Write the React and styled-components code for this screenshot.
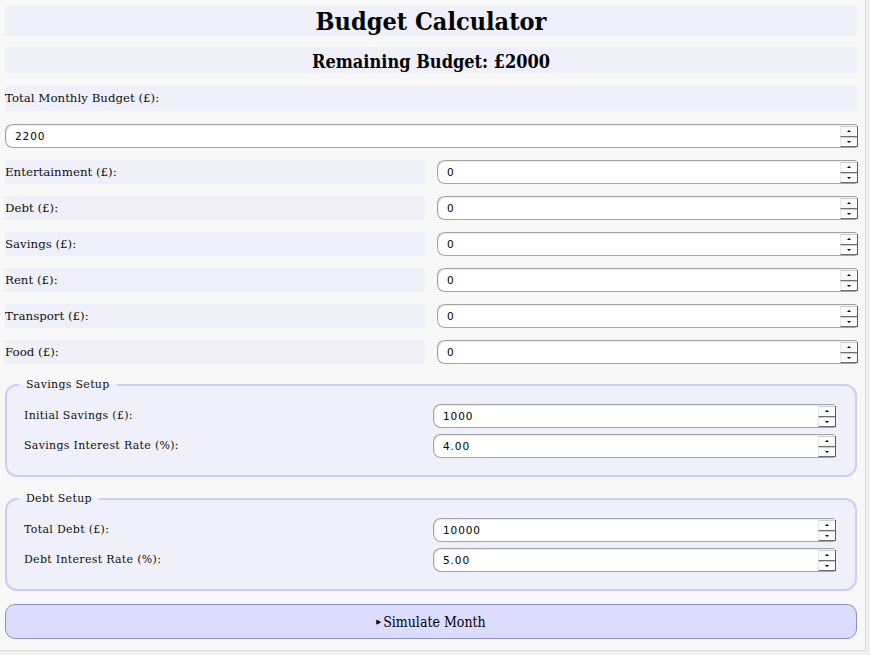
import React from "react";
import styled, { createGlobalStyle } from "styled-components";

const Global = createGlobalStyle`
  html, body { margin: 0; padding: 0; background: #f0f0f0; }
  body { font-family: "DejaVu Serif", serif; }
`;

const Frame = styled.div`
  width: 865px;
  height: 650px;
  background: #f8f8f8;
  border-right: 1px solid #dedede;
  border-bottom: 1px solid #dedede;
  overflow: hidden;
`;

const Page = styled.div`
  width: 852px;
  padding: 6px 0 0 5px;
  display: flex;
  flex-direction: column;
`;

const Title = styled.h1`
  margin: 0;
  height: 30px;
  background: #f0f0fa;
  font-family: "DejaVu Serif Condensed", "DejaVu Serif", serif;
  font-weight: bold;
  font-size: 25px;
  line-height: 31px;
  text-align: center;
  color: #000;
`;

const Remaining = styled.h2`
  margin: 11px 0 0;
  height: 26px;
  background: #f0f0fa;
  font-family: "DejaVu Serif Condensed", "DejaVu Serif", serif;
  font-weight: bold;
  font-size: 18px;
  line-height: 29px;
  text-align: center;
  color: #000;
`;

const LabelBar = styled.div`
  height: 24px;
  background: #f0f0fa;
  font-size: 11.8px;
  line-height: 24px;
  color: #111;
  white-space: nowrap;
`;

const TotalLabel = styled(LabelBar)`
  margin-top: 13px;
  height: 25px;
  line-height: 25px;
`;

const Rows = styled.div`
  display: grid;
  grid-template-columns: 1fr 1fr;
  column-gap: 12px;
  row-gap: 12px;
  margin-top: 12px;
`;

const TopInput = styled.div`
  margin-top: 13px;
`;

const Box = styled.div`
  display: flex;
  height: 24px;
  box-sizing: border-box;
  border: 1px solid #a4a4a4;
  border-right: none;
  border-radius: 8px 2px 2px 8px;
  background: #fff;
  box-shadow: inset 1px 1px 1px rgba(0, 0, 0, 0.08);
`;

const Field = styled.input`
  flex: 1;
  min-width: 0;
  border: none;
  outline: none;
  background: transparent;
  padding: 0 0 0 9px;
  font-family: "DejaVu Sans", sans-serif;
  font-size: 10.5px;
  letter-spacing: 0.9px;
  color: #000;
`;

const Spinner = styled.div`
  width: 17px;
  display: flex;
  flex-direction: column;
  margin: 1px -1px 0 0;
  border-right: 1px solid #5a5a5a;
`;

const SpinBtn = styled.div`
  flex: 1;
  display: flex;
  align-items: center;
  justify-content: center;
  background: #fbfbfb;
  border-top: 1px solid #cfcfcf;
  border-bottom: 1px solid #6e6e6e;
  border-left: 1px solid #e8e8e8;
  &::after {
    content: "";
    border-left: 2px solid transparent;
    border-right: 2px solid transparent;
    ${(p) =>
      p.$up
        ? "border-bottom: 2px solid #000;"
        : "border-top: 2px solid #000;"}
  }
`;

const NumberInput = ({ value }) => (
  <Box>
    <Field type="text" defaultValue={value} />
    <Spinner>
      <SpinBtn $up />
      <SpinBtn />
    </Spinner>
  </Box>
);

const Set = styled.fieldset`
  margin: ${(p) => p.$top}px 0 0;
  padding: 13px 20px 17px 12px;
  border: 2px solid #ccccff;
  border-radius: 12px;
  background: #f0f0fa;
  min-width: 0;
`;

const Legend = styled.legend`
  padding: 0 7px;
  font-size: 11px;
  letter-spacing: 0.3px;
  color: #111;
`;

const SetGrid = styled.div`
  display: grid;
  grid-template-columns: 1fr 1fr;
  column-gap: 7px;
  row-gap: 6px;
  padding-left: 5px;
`;

const SetLabel = styled.div`
  height: 24px;
  line-height: 24px;
  font-size: 11px;
  letter-spacing: 0.3px;
  color: #111;
`;

const Button = styled.button`
  margin-top: 13px;
  height: 35px;
  border: 1px solid #8e8ec8;
  border-radius: 10px;
  background: #dcdcfe;
  font-family: "DejaVu Serif Condensed", "DejaVu Serif", serif;
  font-size: 14px;
  color: #000;
  cursor: pointer;
  display: flex;
  align-items: center;
  justify-content: center;
  gap: 2px;
`;

const Tri = styled.span`
  font-size: 7px;
`;

const categories = ["Entertainment", "Debt", "Savings", "Rent", "Transport", "Food"];

export default function App() {
  return (
    <Frame>
      <Global />
      <Page>
        <Title>Budget Calculator</Title>
        <Remaining>Remaining Budget: £2000</Remaining>
        <TotalLabel>Total Monthly Budget (£):</TotalLabel>
        <TopInput>
          <NumberInput value="2200" />
        </TopInput>
        <Rows>
          {categories.map((c) => (
            <React.Fragment key={c}>
              <LabelBar>{c} (£):</LabelBar>
              <NumberInput value="0" />
            </React.Fragment>
          ))}
        </Rows>
        <Set $top={14}>
          <Legend>Savings Setup</Legend>
          <SetGrid>
            <SetLabel>Initial Savings (£):</SetLabel>
            <NumberInput value="1000" />
            <SetLabel>Savings Interest Rate (%):</SetLabel>
            <NumberInput value="4.00" />
          </SetGrid>
        </Set>
        <Set $top={15}>
          <Legend>Debt Setup</Legend>
          <SetGrid>
            <SetLabel>Total Debt (£):</SetLabel>
            <NumberInput value="10000" />
            <SetLabel>Debt Interest Rate (%):</SetLabel>
            <NumberInput value="5.00" />
          </SetGrid>
        </Set>
        <Button>
          <Tri>▶</Tri>Simulate Month
        </Button>
      </Page>
    </Frame>
  );
}
